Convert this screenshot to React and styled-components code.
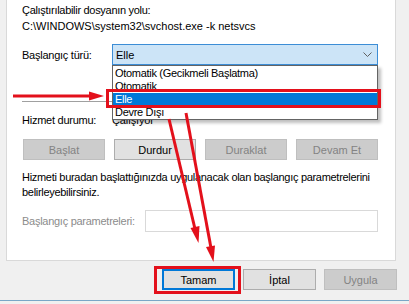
import styled, { createGlobalStyle } from 'styled-components';

const GlobalStyle = createGlobalStyle`
    html, body {
        margin: 0;
        padding: 0;
        background: #f0f0f0;
        overflow: hidden;
    }
    body {
        font-family: "Liberation Sans", Arial, sans-serif;
        font-size: 11px;
        color: #000;
    }
`;

const startupTypes = ['Otomatik (Gecikmeli Başlatma)', 'Otomatik', 'Elle', 'Devre Dışı'];

export default function App() {
    return (
        <Window>
            <GlobalStyle />
            <Panel>
                <Line spacing="-0.3px">Çalıştırılabilir dosyanın yolu:</Line>
                <Line>C:\WINDOWS\system32\svchost.exe -k netsvcs</Line>
                <StartupRow>
                    <Label>Başlangıç türü:</Label>
                    <Combo>
                        <span>Elle</span>
                        <svg width="9" height="6" viewBox="0 0 9 6">
                            <path d="M0.5 0.5 L4.5 4.5 L8.5 0.5" fill="none" stroke="#606060" strokeWidth="1" />
                        </svg>
                        <DropList>
                            {startupTypes.map((t) => (
                                <Option key={t} selected={t === 'Elle'}>{t}</Option>
                            ))}
                        </DropList>
                    </Combo>
                </StartupRow>
                <Separator />
                <StatusRow>
                    <Label>Hizmet durumu:</Label>
                    <span>Çalışıyor</span>
                </StatusRow>
                <ButtonRow>
                    <Button disabled>Başlat</Button>
                    <Button>Durdur</Button>
                    <Button disabled>Duraklat</Button>
                    <Button disabled>Devam Et</Button>
                </ButtonRow>
                <Help>
                    Hizmeti buradan başlattığınızda uygulanacak olan başlangıç parametrelerini<br />
                    belirleyebilirsiniz.
                </Help>
                <ParamRow>
                    <ParamLabel>Başlangıç parametreleri:</ParamLabel>
                    <ParamInput />
                </ParamRow>
            </Panel>
            <Footer>
                <Button wide focused>Tamam</Button>
                <Button wide>İptal</Button>
                <Button wide disabled>Uygula</Button>
            </Footer>
            <BottomEdge />
            <Marks width="409" height="304" viewBox="0 0 409 304">
                <g fill="#e3101b" stroke="#e3101b">
                    <rect x="107.5" y="90.5" width="272" height="16" fill="none" strokeWidth="3" />
                    <rect x="155.5" y="267.5" width="84" height="25" fill="none" strokeWidth="3" />
                    <line x1="13" y1="96" x2="92" y2="96" strokeWidth="3" />
                    <polygon points="104,96 89,91.5 89,100.5" stroke="none" />
                    <line x1="169" y1="119" x2="195" y2="229" strokeWidth="3" />
                    <polygon points="198.5,243 190.5,228 199.5,226" stroke="none" />
                    <line x1="186" y1="113" x2="211" y2="248" strokeWidth="3" />
                    <polygon points="213.5,262 206,247 215,245.5" stroke="none" />
                </g>
            </Marks>
        </Window>
    );
}

const Window = styled.div`
    position: relative;
    width: 409px;
    height: 304px;
    background: #f0f0f0;
`;

const Panel = styled.div`
    display: flex;
    flex-direction: column;
    box-sizing: border-box;
    width: 390px;
    height: 261px;
    margin-left: 6px;
    padding: 2px 17px 0 15px;
    background: #fff;
    border: 1px solid #d9d9d9;
    border-top: none;
`;

const Line = styled.div`
    line-height: 16px;
    white-space: nowrap;
    letter-spacing: ${(p) => p.spacing || '0'};
`;

const StartupRow = styled.div`
    display: flex;
    align-items: center;
    margin-top: 10px;
`;

const Label = styled.div`
    width: 90px;
    flex-shrink: 0;
    line-height: 16px;
    white-space: nowrap;
    letter-spacing: -0.25px;
`;

const Combo = styled.div`
    position: relative;
    display: flex;
    align-items: center;
    justify-content: space-between;
    box-sizing: border-box;
    width: 266px;
    height: 21px;
    padding: 0 5px 0 3px;
    background: #cce4f7;
    border: 1px solid #3c8dd6;
`;

const DropList = styled.div`
    position: absolute;
    top: 20px;
    left: -1px;
    z-index: 2;
    box-sizing: border-box;
    width: 266px;
    padding: 1px 0 0;
    background: #fff;
    border: 1px solid #646464;
    box-shadow: 3px 3px 3px rgba(0, 0, 0, 0.25);
`;

const Option = styled.div`
    height: 13px;
    line-height: 13px;
    padding-left: 2px;
    letter-spacing: -0.3px;
    background: ${(p) => (p.selected ? '#0078d7' : 'transparent')};
    color: ${(p) => (p.selected ? '#fff' : '#000')};
`;

const Separator = styled.div`
    height: 1px;
    margin-top: 36px;
    background: #a0a0a0;
`;

const StatusRow = styled.div`
    display: flex;
    line-height: 16px;
    margin-top: 10px;
    letter-spacing: -0.2px;
`;

const ButtonRow = styled.div`
    display: flex;
    gap: 9px;
    margin-top: 11px;
    padding-left: 1px;
`;

const Button = styled.button`
    box-sizing: border-box;
    width: ${(p) => (p.wide ? '73px' : '82px')};
    height: 21px;
    padding: 0;
    font-family: inherit;
    font-size: 11px;
    color: ${(p) => (p.disabled ? '#838383' : '#000')};
    background: ${(p) => (p.disabled ? '#cccccc' : '#e1e1e1')};
    border: ${(p) => (p.focused ? '2px solid #0078d7' : p.disabled ? '1px solid #bfbfbf' : '1px solid #adadad')};
`;

const Help = styled.div`
    line-height: 15px;
    margin-top: 10px;
    white-space: nowrap;
    letter-spacing: -0.3px;
`;

const ParamRow = styled.div`
    display: flex;
    align-items: center;
    margin-top: 10px;
`;

const ParamLabel = styled.div`
    width: 123px;
    flex-shrink: 0;
    white-space: nowrap;
    letter-spacing: -0.27px;
    color: #8c8c8c;
`;

const ParamInput = styled.div`
    box-sizing: border-box;
    width: 234px;
    height: 22px;
    border: 1px solid #d9d9d9;
    background: #fff;
`;

const Footer = styled.div`
    display: flex;
    justify-content: flex-end;
    gap: 8px;
    padding: 8px 12px 0 0;
`;

const BottomEdge = styled.div`
    height: 1px;
    margin-top: 10px;
    background: #7aa7c7;
`;

const Marks = styled.svg`
    position: absolute;
    top: 0;
    left: 0;
    z-index: 5;
    pointer-events: none;
`;
